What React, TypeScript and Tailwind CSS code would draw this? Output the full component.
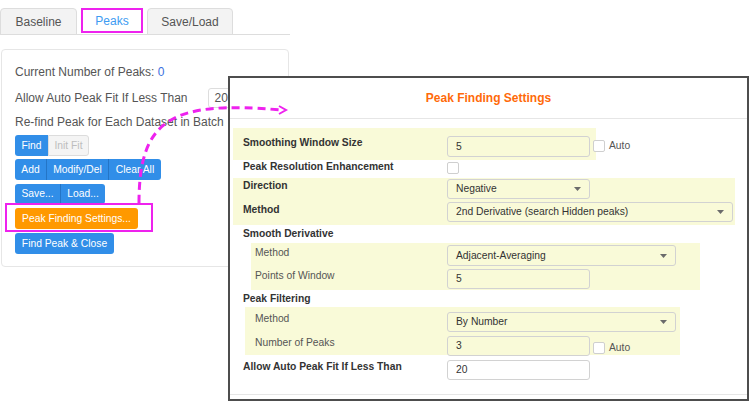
import React from "react";

const Inp = ({ w, h = 20, children }: { w: number; h?: number; children?: React.ReactNode }) => (
  <div
    style={{ width: w, height: h }}
    className="shrink-0 border border-[#d2d2d2] rounded-[3px] pl-[8px] flex items-center text-[10.3px] text-[#333]"
  >
    {children}
  </div>
);

const Sel = ({ w, h = 20, children }: { w: number; h?: number; children?: React.ReactNode }) => (
  <div
    style={{ width: w, height: h }}
    className="shrink-0 border border-[#d2d2d2] rounded-[3px] pl-[8px] pr-[8px] flex items-center text-[10.3px] text-[#333]"
  >
    <span className="flex-1">{children}</span>
    <svg width="7" height="4" viewBox="0 0 7 4">
      <path d="M0 0h7L3.5 4z" fill="#6b6b6b" />
    </svg>
  </div>
);

const Check = () => <div className="shrink-0 w-[12px] h-[12px] border border-[#cfcfcf] rounded-[2px] bg-white" />;

const BtnGroup = ({ items }: { items: { t: string; w: number; dis?: boolean }[] }) => (
  <div className="flex h-full">
    {items.map((it, i) => (
      <div
        key={i}
        style={{ width: it.w }}
        className={
          (it.dis
            ? "bg-[#f4f4f4] text-[#bdbdbd] border border-[#dcdcdc] "
            : "bg-[#318ee8] text-white ") +
          (i === 0 ? "rounded-l-[3px] " : "") +
          (i === items.length - 1 ? "rounded-r-[3px] " : "") +
          (i > 0 && !it.dis ? "border-l border-[#2475c6] " : "") +
          "h-full flex items-center justify-center text-[10.3px] whitespace-nowrap"
        }
      >
        {it.t}
      </div>
    ))}
  </div>
);

export default function App() {
  return (
    <div className="relative w-[750px] h-[403px] overflow-hidden bg-white font-['Liberation_Sans',Arial,sans-serif] text-[#555]">
      {/* Left area */}
      <div className="w-[290px]">
        <div className="flex items-end h-[35px] pt-[7px] border-b border-[#dddddd]">
          <div className="w-[77px] h-[27px] -mb-px bg-[#f3f3f3] border border-[#dddddd] rounded-t-[4px] flex items-center justify-center text-[12px] text-[#555]">
            Baseline
          </div>
          <div className="ml-[4px] mb-[1px] w-[62px] h-[25px] bg-white border-2 border-[#ee22ee] flex items-center justify-center text-[12px] text-[#3d9bf2]">
            Peaks
          </div>
          <div className="ml-[4px] w-[86px] h-[27px] -mb-px bg-[#f3f3f3] border border-[#dddddd] rounded-t-[4px] flex items-center justify-center text-[12px] text-[#555]">
            Save/Load
          </div>
        </div>

        <div className="mt-[14px] ml-[1px] w-[288px] h-[218px] border border-[#e6e6e6] rounded-[4px] pl-[13px] pt-[12px] text-[12px] text-[#555] whitespace-nowrap">
          <div className="h-[20px] leading-[20px]">
            Current Number of Peaks: <span className="text-[#3b6fe0]">0</span>
          </div>
          <div className="mt-[6px] h-[20px] flex items-center">
            <span className="shrink-0">Allow Auto Peak Fit If Less Than</span>
            <div className="shrink-0 ml-[20px] h-[20px] w-[90px] border border-[#dddddd] rounded-[3px] pl-[6px] flex items-center">20</div>
          </div>
          <div className="mt-[4px] h-[20px] leading-[20px]">Re-find Peak for Each Dataset in Batch</div>
          <div className="mt-[3px] h-[21px]">
            <BtnGroup items={[{ t: "Find", w: 33 }, { t: "Init Fit", w: 41, dis: true }]} />
          </div>
          <div className="mt-[3px] h-[21px]">
            <BtnGroup items={[{ t: "Add", w: 31 }, { t: "Modify/Del", w: 62 }, { t: "Clear All", w: 53 }]} />
          </div>
          <div className="mt-[4px] h-[20px]">
            <BtnGroup items={[{ t: "Save...", w: 45 }, { t: "Load...", w: 45 }]} />
          </div>
          <div className="relative mt-[4px] h-[21px] w-[123px]">
            <div className="h-full w-full rounded-[3px] bg-[#ff9900] text-white text-[10.3px] flex items-center justify-center">
              Peak Finding Settings...
            </div>
            <div className="absolute -left-[10px] -right-[15px] -top-[5px] -bottom-[3px] border-2 border-[#ee22ee]" />
          </div>
          <div className="mt-[4px] h-[21px] w-[99px] rounded-[3px] bg-[#318ee8] text-white text-[10.3px] flex items-center justify-center">
            Find Peak &amp; Close
          </div>
        </div>
      </div>

      {/* Dialog */}
      <div className="absolute left-[228px] top-[76px] w-[521px] h-[325px] border-2 border-[#4d4d4d] bg-white flex flex-col">
        <div className="h-[41px] shrink-0 border-b border-[#e6e6e6] flex items-center justify-center text-[12px] font-bold text-[#ff6a0a]">
          Peak Finding Settings
        </div>
        <div className="pl-[3px] pt-[9px] flex flex-col text-[10.3px] text-[#333]">
          {/* Smoothing */}
          <div className="flex items-start h-[32px]">
            <div className="w-[363px] h-[32px] bg-[#f9fad8] flex items-start pt-[8px]">
              <div className="w-[214px] pl-[10px] leading-[14px] font-bold">Smoothing Window Size</div>
              <Inp w={143} h={21}>5</Inp>
            </div>
            <div className="-ml-[3px] mt-[10px] flex items-center gap-[4px] text-[#555]">
              <Check />
              <span>Auto</span>
            </div>
          </div>
          {/* Peak Resolution */}
          <div className="flex items-start h-[18px]">
            <div className="w-[214px] pl-[10px] leading-[14px] font-bold pt-[0px]">Peak Resolution Enhancement</div>
            <div className="mt-[2px]"><Check /></div>
          </div>
          {/* Direction / Method */}
          <div className="w-[502px] h-[47px] bg-[#f9fad8] pt-[1px] flex flex-col gap-[3px]">
            <div className="flex items-start">
              <div className="w-[214px] pl-[10px] leading-[14px] font-bold">Direction</div>
              <Sel w={143}>Negative</Sel>
            </div>
            <div className="flex items-start">
              <div className="w-[214px] pl-[10px] leading-[14px] font-bold pt-[1px]">Method</div>
              <Sel w={286}>2nd Derivative (search Hidden peaks)</Sel>
            </div>
          </div>
          {/* Smooth Derivative */}
          <div className="h-[18px] pl-[10px] leading-[18px] font-bold">Smooth Derivative</div>
          <div className="ml-[18px] w-[449px] h-[47px] bg-[#f9fad8] pt-[2px] flex flex-col gap-[3px] text-[#555]">
            <div className="flex items-start">
              <div className="w-[196px] pl-[4px] leading-[14px] pt-[1px]">Method</div>
              <Sel w={229} h={21}>Adjacent-Averaging</Sel>
            </div>
            <div className="flex items-start">
              <div className="w-[196px] pl-[4px] leading-[14px]">Points of Window</div>
              <Inp w={143}>5</Inp>
            </div>
          </div>
          {/* Peak Filtering */}
          <div className="h-[17px] pl-[10px] pt-[2px] leading-[14px] font-bold">Peak Filtering</div>
          <div className="ml-[12px] w-[435px] h-[48px] bg-[#f9fad8] pt-[5px] flex flex-col gap-[4px] text-[#555]">
            <div className="flex items-start">
              <div className="w-[202px] pl-[10px] leading-[14px]">Method</div>
              <Sel w={229}>By Number</Sel>
            </div>
            <div className="flex items-start">
              <div className="w-[202px] pl-[10px] leading-[14px]">Number of Peaks</div>
              <Inp w={143}>3</Inp>
              <div className="ml-[3px] mt-[4px] flex items-center gap-[4px]">
                <Check />
                <span>Auto</span>
              </div>
            </div>
          </div>
          {/* Allow auto */}
          <div className="flex items-start pt-[5px]">
            <div className="w-[214px] pl-[10px] leading-[14px] font-bold">Allow Auto Peak Fit If Less Than</div>
            <Inp w={143}>20</Inp>
          </div>
        </div>
        <div className="flex-1" />
        <div className="h-[5px] border-t border-[#e6e6e6]" />
      </div>

      {/* Annotation arrow */}
      <svg className="absolute left-0 top-0 pointer-events-none" width="750" height="403" viewBox="0 0 750 403">
        <path
          d="M139 203 C139 120 170 100 281 110"
          fill="none"
          stroke="#ee22ee"
          strokeWidth="3"
          strokeDasharray="8 5"
        />
        <path d="M279 106 L286 110 L279 114" fill="none" stroke="#ee22ee" strokeWidth="2" />
      </svg>
    </div>
  );
}
